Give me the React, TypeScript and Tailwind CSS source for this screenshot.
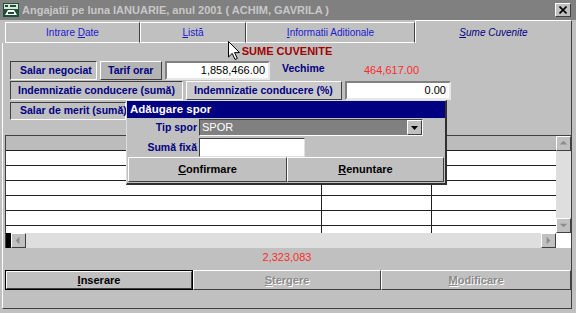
import React from 'react';

const rowLabel = 'h-full flex items-center bg-[#c0c0c0] border border-t-[#404040] border-l-[#404040] border-r-white border-b-white text-[10.5px] font-bold text-[#000080] whitespace-nowrap';
const raisedLabel = 'h-full flex items-center border border-t-white border-l-white border-r-[#404040] border-b-[#404040] text-[10.5px] font-bold text-[#000080] whitespace-nowrap';
const field = 'h-full bg-white border-2 border-t-[#808080] border-l-[#808080] border-r-[#e8e8e8] border-b-[#e8e8e8] flex items-center justify-end pr-[3px] text-[11px] text-black';

function AppIcon() {
  return (
    <svg width="16" height="14" viewBox="0 0 16 14">
      <rect x="0" y="0" width="16" height="14" fill="#1f4f3a" />
      <rect x="1" y="1" width="14" height="5" fill="#d8e8d8" />
      <rect x="2" y="2" width="3" height="2" fill="#1f4f3a" />
      <rect x="7" y="2" width="6" height="2" fill="#1f4f3a" />
      <path d="M2 12 L5 7 L11 7 L14 12 Z" fill="#ffffff" />
      <rect x="5" y="9" width="6" height="2" fill="#1f4f3a" />
    </svg>
  );
}

function Cursor() {
  return (
    <svg width="13" height="20" viewBox="0 0 13 20" className="absolute left-[228px] top-[41px]">
      <path d="M0.5 0.5 L0.5 16 L4.2 12.4 L7 18.5 L9.3 17.5 L6.6 11.6 L11.5 11.6 Z" fill="#ffffff" stroke="#000000" strokeWidth="1" />
    </svg>
  );
}

function Tab({ label, u, rest, w, active }: { label?: string; u: string; rest: string; w: string; active?: boolean }) {
  if (active) {
    return (
      <div className={`${w} h-[23px] flex items-center justify-center border-t border-t-white border-l border-l-white border-r border-r-[#404040] text-[10px] italic text-[#000080]`}>
        <span><span className="underline">{u}</span>{rest}</span>
      </div>
    );
  }
  return (
    <div className={`${w} h-[21px] flex items-center justify-center border-t border-t-white border-l border-l-white border-r border-r-[#404040] border-b border-b-white text-[10px] text-[#1a1ad0]`}>
      <span>{label}<span className="underline">{u}</span>{rest}</span>
    </div>
  );
}

function ArrowBtn({ dir }: { dir: 'up' | 'down' | 'left' | 'right' }) {
  const pts = {
    up: '3,8 7,4 11,8',
    down: '3,5 7,9 11,5',
    left: '8,3 4,7 8,11',
    right: '5,3 9,7 5,11',
  }[dir];
  return (
    <div className="w-[15px] h-[15px] shrink-0 bg-[#c0c0c0] border border-t-white border-l-white border-r-[#404040] border-b-[#404040] flex items-center justify-center">
      <svg width="13" height="13" viewBox="0 0 14 14">
        <polygon points={pts} fill="#8c8c8c" />
      </svg>
    </div>
  );
}

function GridRow({ h = 'h-[15px]' }: { h?: string }) {
  return (
    <div className={`${h} grid grid-cols-[316px_110px_1fr] bg-white border-b border-b-[#202020]`}>
      <div className="border-r border-r-[#202020]" />
      <div className="border-r border-r-[#202020]" />
      <div />
    </div>
  );
}

function Button({ children, disabled, primary, w }: { children: React.ReactNode; disabled?: boolean; primary?: boolean; w: string }) {
  const text = disabled ? 'text-[#8a8a8a] [text-shadow:1px_1px_0_#ffffff]' : 'text-black';
  if (primary) {
    return (
      <div className={`${w} h-full border border-black`}>
        <div className={`h-full flex items-center justify-center border border-t-white border-l-white border-r-[#404040] border-b-[#404040] text-[11px] font-bold ${text}`}>
          {children}
        </div>
      </div>
    );
  }
  return (
    <div className={`${w} h-full flex items-center justify-center border border-t-white border-l-white border-r-[#404040] border-b-[#404040] text-[11px] font-bold ${text}`}>
      {children}
    </div>
  );
}

export default function App() {
  return (
    <div className="relative w-[576px] h-[313px] overflow-hidden bg-[#c0c0c0] font-['Liberation_Sans',Arial,sans-serif] flex flex-col">
      {/* title bar */}
      <div className="h-[20px] shrink-0 flex items-center bg-[#808080] pl-[3px] pr-[5px] gap-[3px]">
        <AppIcon />
        <span className="text-[11px] font-bold text-[#c8c8c8] whitespace-nowrap">Angajatii pe luna IANUARIE, anul 2001 ( ACHIM, GAVRILA )</span>
        <div className="ml-auto w-[16px] h-[14px] bg-[#c0c0c0] border border-t-white border-l-white border-r-[#404040] border-b-[#404040] flex items-center justify-center">
          <svg width="8" height="8" viewBox="0 0 8 8">
            <path d="M0.5 0.5 L7.5 7.5 M7.5 0.5 L0.5 7.5" stroke="#000" strokeWidth="1.6" />
          </svg>
        </div>
      </div>

      {/* tabs */}
      <div className="h-[23px] shrink-0 flex items-end pl-[5px] pr-[4px]">
        <Tab w="w-[135px]" label="Intrare " u="D" rest="ate" />
        <Tab w="w-[106px]" u="L" rest="istă" />
        <Tab w="w-[169px]" u="I" rest="nformatii Aditionale" />
        <Tab w="flex-1" u="S" rest="ume Cuvenite" active />
      </div>

      {/* panel */}
      <div className="flex-1 ml-[2px] mr-[4px] mb-[4px] border-l border-l-white border-r border-r-[#404040] border-b border-b-[#404040] flex flex-col">
        <div className="h-[16px] flex items-center justify-center text-[11px] font-bold text-[#a00000]">SUME CUVENITE</div>

        <div className="mt-[2px] h-[19px] flex items-center pl-[7px]">
          <div className={`${rowLabel} w-[87px] pl-[9px]`}>Salar negociat</div>
          <div className={`${raisedLabel} ml-[3px] w-[62px] pl-[7px] bg-[#b4b4b4]`}>Tarif orar</div>
          <div className={`${field} ml-[3px] w-[105px]`}>1,858,466.00</div>
          <div className="ml-[12px] w-[82px] text-[10.5px] font-bold text-[#000080] -mt-[3px]">Vechime</div>
          <div className="text-[11px] text-[#ff2a2a]">464,617.00</div>
        </div>

        <div className="mt-[1px] h-[19px] flex items-center pl-[7px]">
          <div className={`${rowLabel} w-[173px] pl-[7px]`}>Indemnizatie conducere (sumă)</div>
          <div className={`${raisedLabel} ml-[3px] w-[156px] pl-[7px] bg-[#cacaca]`}>Indemnizatie conducere (%)</div>
          <div className={`${field} ml-[3px] w-[106px]`}>0.00</div>
        </div>

        <div className="mt-[2px] h-[18px] flex items-center pl-[7px]">
          <div className={`${rowLabel} w-[116px] pl-[9px]`}>Salar de merit (sumă)</div>
        </div>

        {/* grid */}
        <div className="mt-[15px] ml-[2px] h-[113px] border-t border-t-[#404040] border-l border-l-[#404040] flex flex-col">
          <div className="flex-1 flex min-h-0">
            <div className="flex-1 flex flex-col overflow-hidden">
              <div className="h-[15px] shrink-0 bg-[#bcbcbc] border-b border-b-[#202020]" />
              <GridRow />
              <GridRow />
              <GridRow />
              <GridRow />
              <GridRow />
              <div className="flex-1 grid grid-cols-[316px_110px_1fr] bg-white">
                <div className="border-r border-r-[#202020]" />
                <div className="border-r border-r-[#202020]" />
                <div />
              </div>
            </div>
            <div className="w-[15px] flex flex-col bg-[#dedede]">
              <ArrowBtn dir="up" />
              <div className="flex-1" />
              <ArrowBtn dir="down" />
            </div>
          </div>
          <div className="h-[15px] shrink-0 flex">
            <div className="w-[5px] bg-black" />
            <ArrowBtn dir="left" />
            <div className="flex-1 bg-[#dedede]" />
            <ArrowBtn dir="right" />
            <div className="w-[15px] bg-white" />
          </div>
        </div>

        <div className="h-[18px] flex items-center justify-center text-[11px] text-[#ff2a2a]">2,323,083</div>

        <div className="mt-[4px] ml-[2px] h-[20px] flex">
          <Button w="w-[188px]" primary><span><span className="underline">I</span>nserare</span></Button>
          <Button w="w-[188px]" disabled><span><span className="underline">S</span>tergere</span></Button>
          <Button w="flex-1" disabled><span><span className="underline">M</span>odificare</span></Button>
        </div>
      </div>

      {/* dialog */}
      <div className="absolute left-[126px] top-[100px] w-[321px] h-[85px] bg-[#c0c0c0] border border-t-[#dcdcdc] border-l-[#dcdcdc] border-r-2 border-r-[#303030] border-b-2 border-b-[#303030] flex flex-col">
        <div className="h-[17px] bg-[#000080] flex items-center px-[3px] text-[11.5px] font-bold text-white">Adăugare spor</div>
        <div className="mt-[1px] h-[17px] flex items-center">
          <div className="w-[70px] text-right text-[10.5px] font-bold text-[#000080]">Tip spor</div>
          <div className="ml-[2px] w-[224px] h-full flex items-center bg-[#808080] border border-t-[#404040] border-l-[#404040] border-r-white border-b-white">
            <span className="flex-1 pl-[2px] text-[11px] text-white">SPOR</span>
            <div className="w-[15px] h-full bg-[#c0c0c0] border border-t-white border-l-white border-r-[#404040] border-b-[#404040] flex items-center justify-center">
              <svg width="7" height="4" viewBox="0 0 7 4"><polygon points="0,0 7,0 3.5,4" fill="#000" /></svg>
            </div>
          </div>
        </div>
        <div className="mt-[2px] h-[19px] flex items-center">
          <div className="w-[70px] text-right text-[10.5px] font-bold text-[#000080]">Sumă fixă</div>
          <div className="ml-[2px] w-[106px] h-full bg-white border border-t-[#404040] border-l-[#404040] border-r-[#e0e0e0] border-b-[#e0e0e0]" />
        </div>
        <div className="flex-1 flex px-[1px] pb-[1px]">
          <Button w="w-[159px]"><span><span className="underline">C</span>onfirmare</span></Button>
          <Button w="flex-1"><span><span className="underline">R</span>enuntare</span></Button>
        </div>
      </div>

      <Cursor />
    </div>
  );
}
